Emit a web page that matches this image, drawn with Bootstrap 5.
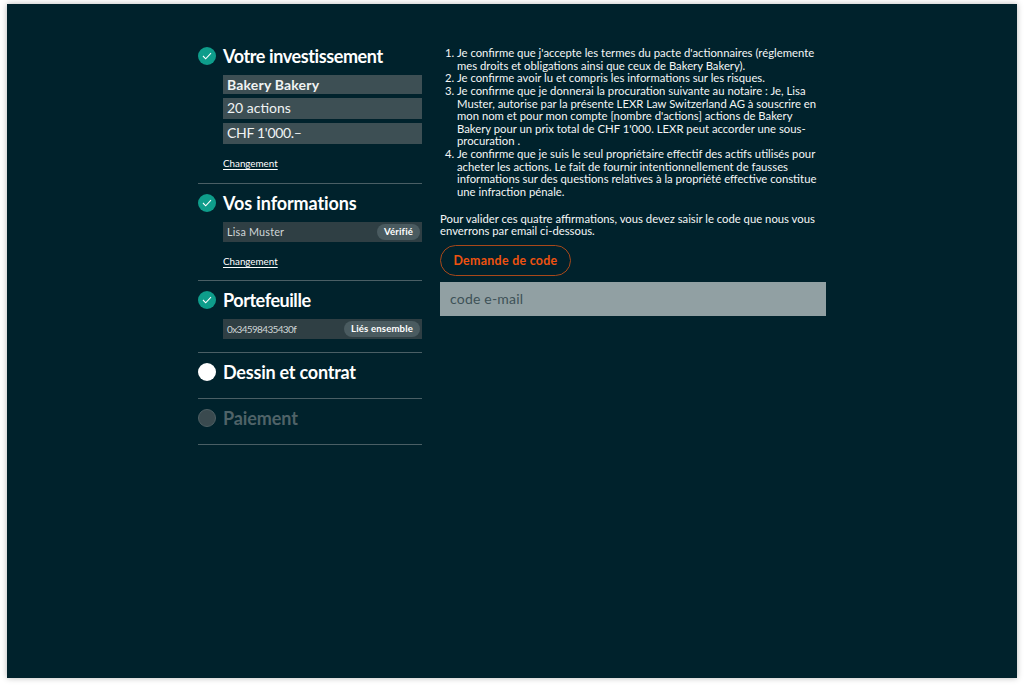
<!DOCTYPE html>
<html lang="fr">
<head>
<meta charset="utf-8">
<title>Investissement</title>
<link href="https://cdn.jsdelivr.net/npm/bootstrap@5.3.0/dist/css/bootstrap.min.css" rel="stylesheet">
<style>
html,body{height:687px;overflow:hidden;background:#fff;}
body{font-family:"Lato","Liberation Sans",sans-serif;padding:4px 7px 9px;}
.panel-dark{height:674px;background:#00222c;box-shadow:0 0 6px rgba(0,0,0,.28);color:#fff;padding-top:38px;}
.col-steps{width:224px;}
.col-text{width:386px;margin-left:18px;font-size:11.3px;line-height:12.64px;padding-top:5px;color:#f4f6f6;}
.step{border-bottom:1px solid #4a5f65;}
.step-1{height:142px;padding-top:5px;}
.step-2{height:97px;padding-top:10px;}
.step-3{height:72px;padding-top:10px;}
.step-4{height:46px;padding-top:10px;}
.step-5{height:46px;padding-top:10px;}
.step-head{height:18px;gap:7px;}
.step-dot{width:18px;height:18px;border-radius:50%;flex:none;}
.dot-done{background:#0e9d8b;}
.dot-now{background:#fff;}
.dot-off{background:#3a4a4f;border:1px solid #4e5f63;}
.step-title{font-size:18px;font-weight:700;line-height:18px;white-space:nowrap;letter-spacing:-.1px;}
.tight-a{letter-spacing:-.4px;}
.tight-b{letter-spacing:-.45px;}
.tight-c{letter-spacing:-.22px;}
.title-off{color:#4f6368;}
.step-body{margin-left:25px;}
.val-box{background:#3d4f54;padding-left:4px;font-size:14px;color:#f0f3f3;}
.val-a{height:19px;line-height:19px;margin-top:10px;font-weight:700;letter-spacing:.18px;}
.val-b{height:21px;line-height:19px;margin-top:4px;}
.val-c{height:21px;line-height:19px;margin-top:4px;letter-spacing:-.3px;}
.change-link{display:inline-block;font-size:9.8px;line-height:11px;color:#fff;margin-top:14px;text-underline-offset:2px;}
.strip{background:#2f3f44;height:20px;padding:0 2px 0 4px;color:#cfd6d7;}
.strip-name{font-size:10.8px;letter-spacing:.2px;}
.strip-hash{font-size:10px;letter-spacing:-.65px;}
.pill-tag{background:#4a5b60;color:#fff;font-size:9.6px;font-weight:700;border-radius:9px;height:16px;line-height:16px;padding:0 7px;letter-spacing:.15px;}
.mt-s{margin-top:10px;}
.conf-list{margin:0 0 14px;padding-left:17px;}
.req-btn{color:#ee5210;border:1px solid #a8481a;border-radius:16px;height:31px;width:131px;font-size:12.4px;font-weight:700;line-height:29px;padding:0;margin-top:7px;background:transparent;letter-spacing:.3px;}
.req-btn:hover{color:#ee5210;border-color:#a8481a;}
.code-input.form-control{height:34px;margin-top:6px;background:#91a0a3;border:0;border-radius:0;font-size:14px;padding:0 10px;color:#3e5257;letter-spacing:.2px;}
.code-input.form-control::placeholder{color:#3e5257;opacity:1;}
</style>
</head>
<body>
<div class="panel-dark d-flex justify-content-center">
  <div class="col-steps">
    <section class="step step-1">
      <div class="step-head d-flex align-items-center">
        <span class="step-dot dot-done d-flex align-items-center justify-content-center"><svg width="10" height="8" viewBox="0 0 10 8"><path d="M1 4l2.7 2.8L9 1.2" fill="none" stroke="#fff" stroke-width="1.1"/></svg></span>
        <h2 class="step-title tight-a m-0">Votre investissement</h2>
      </div>
      <div class="step-body">
        <div class="val-box val-a">Bakery Bakery</div>
        <div class="val-box val-b">20 actions</div>
        <div class="val-box val-c">CHF 1'000.–</div>
        <a class="change-link" href="#">Changement</a>
      </div>
    </section>
    <section class="step step-2">
      <div class="step-head d-flex align-items-center">
        <span class="step-dot dot-done d-flex align-items-center justify-content-center"><svg width="10" height="8" viewBox="0 0 10 8"><path d="M1 4l2.7 2.8L9 1.2" fill="none" stroke="#fff" stroke-width="1.1"/></svg></span>
        <h2 class="step-title m-0">Vos informations</h2>
      </div>
      <div class="step-body">
        <div class="strip mt-s d-flex align-items-center justify-content-between"><span class="strip-name">Lisa Muster</span><span class="pill-tag">Vérifié</span></div>
        <a class="change-link" href="#">Changement</a>
      </div>
    </section>
    <section class="step step-3">
      <div class="step-head d-flex align-items-center">
        <span class="step-dot dot-done d-flex align-items-center justify-content-center"><svg width="10" height="8" viewBox="0 0 10 8"><path d="M1 4l2.7 2.8L9 1.2" fill="none" stroke="#fff" stroke-width="1.1"/></svg></span>
        <h2 class="step-title tight-b m-0">Portefeuille</h2>
      </div>
      <div class="step-body">
        <div class="strip mt-s d-flex align-items-center justify-content-between"><span class="strip-hash">0x34598435430f</span><span class="pill-tag">Liés ensemble</span></div>
      </div>
    </section>
    <section class="step step-4">
      <div class="step-head d-flex align-items-center">
        <span class="step-dot dot-now"></span>
        <h2 class="step-title tight-c m-0">Dessin et contrat</h2>
      </div>
    </section>
    <section class="step step-5">
      <div class="step-head d-flex align-items-center">
        <span class="step-dot dot-off"></span>
        <h2 class="step-title title-off m-0">Paiement</h2>
      </div>
    </section>
  </div>
  <div class="col-text">
    <ol class="conf-list">
      <li>Je confirme que j'accepte les termes du pacte d'actionnaires (réglemente mes droits et obligations ainsi que ceux de Bakery Bakery).</li>
      <li>Je confirme avoir lu et compris les informations sur les risques.</li>
      <li>Je confirme que je donnerai la procuration suivante au notaire : Je, Lisa Muster, autorise par la présente LEXR Law Switzerland AG à souscrire en mon nom et pour mon compte [nombre d'actions] actions de Bakery Bakery pour un prix total de CHF 1'000. LEXR peut accorder une sous-procuration .</li>
      <li>Je confirme que je suis le seul propriétaire effectif des actifs utilisés pour acheter les actions. Le fait de fournir intentionnellement de fausses informations sur des questions relatives à la propriété effective constitue une infraction pénale.</li>
    </ol>
    <p class="m-0">Pour valider ces quatre affirmations, vous devez saisir le code que nous vous enverrons par email ci-dessous.</p>
    <button type="button" class="btn req-btn d-block">Demande de code</button>
    <input class="form-control code-input" type="text" placeholder="code e-mail">
  </div>
</div>
<script src="https://cdn.jsdelivr.net/npm/bootstrap@5.3.0/dist/js/bootstrap.bundle.min.js"></script>
</body>
</html>
